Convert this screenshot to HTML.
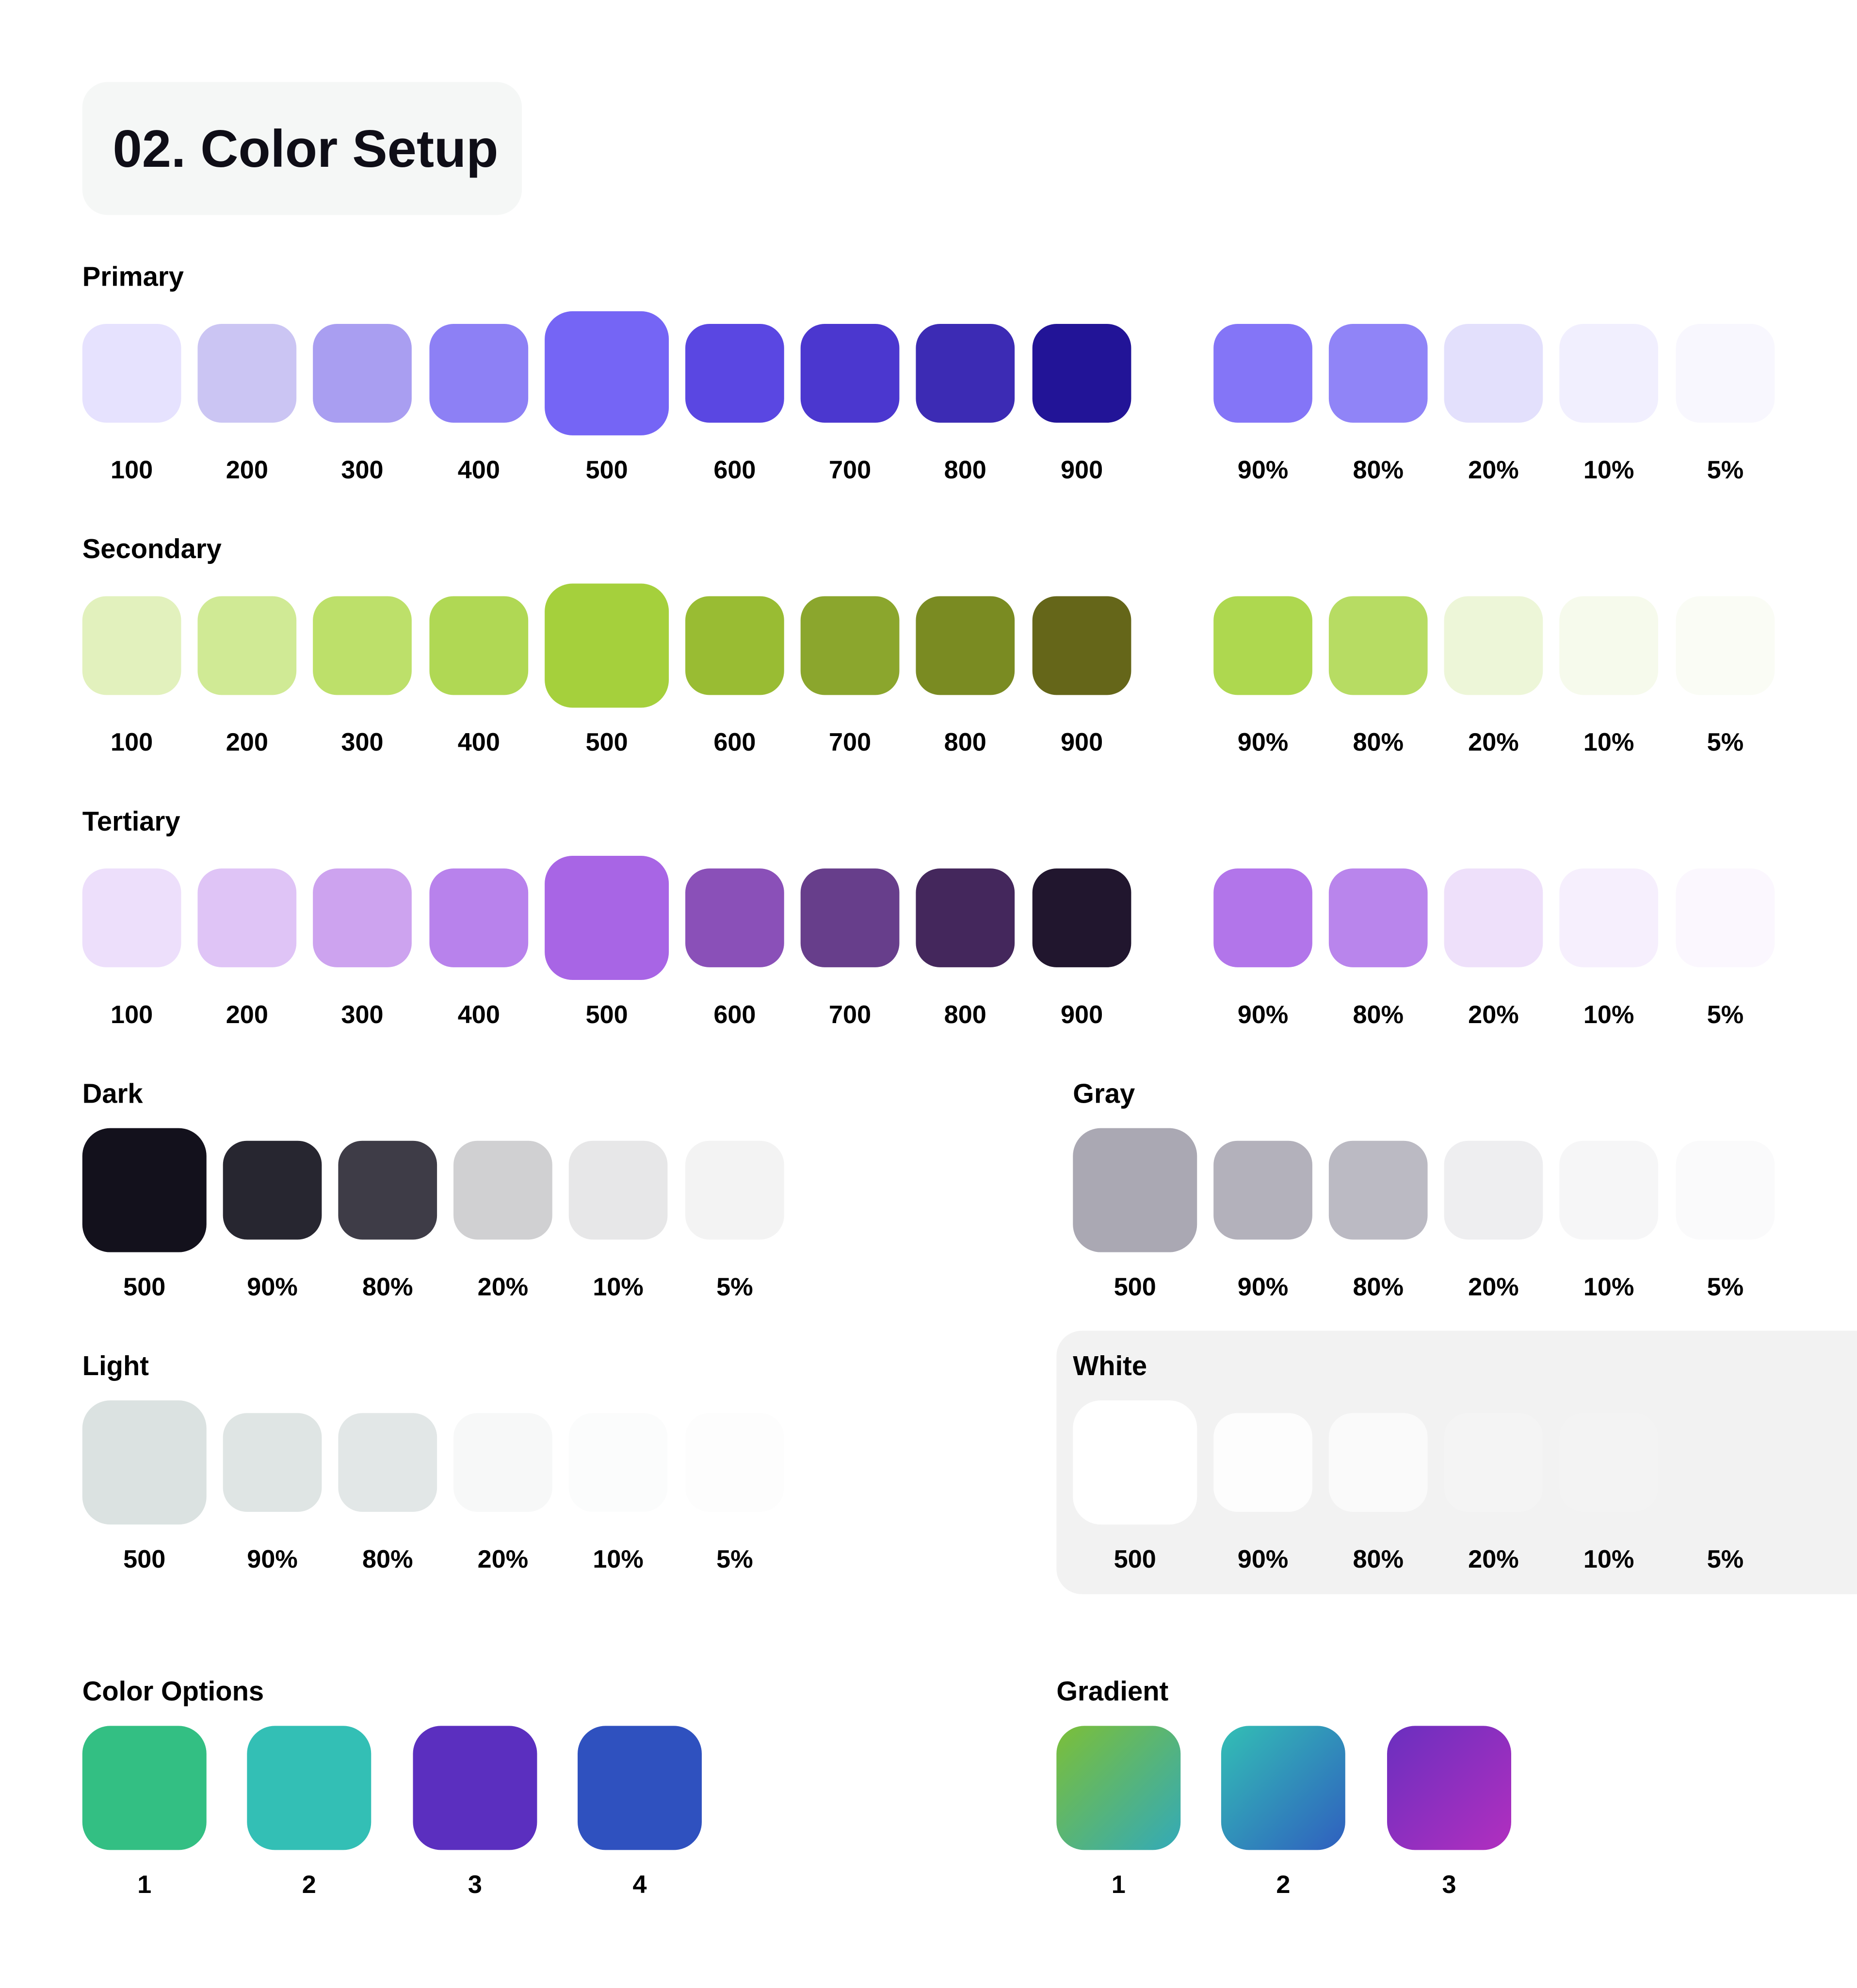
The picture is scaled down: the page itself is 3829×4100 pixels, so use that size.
<!DOCTYPE html>
<html><head><meta charset="utf-8"><style>
html,body{margin:0;padding:0;background:#fff;width:3829px;height:4096px;overflow:hidden}
#w{position:absolute;left:0;top:2px;width:1466px;height:1569px;transform:scale(2.6119);transform-origin:0 0;font-family:"Liberation Sans",sans-serif;font-weight:bold;color:#0f0e17}
.s{position:absolute;width:78px;height:78px;border-radius:19px}
.b{position:absolute;width:98px;height:98px;border-radius:22px}
.l{position:absolute;height:24px;line-height:24px;text-align:center;font-size:20px;color:#000}
.h{position:absolute;font-size:21.5px;height:24px;line-height:24px;color:#000}
</style></head><body><div id="w">
<div style="position:absolute;left:65px;top:64px;width:347px;height:105px;background:#f5f7f6;border-radius:20px"></div>
<div style="position:absolute;left:89px;top:93px;font-size:41.5px;line-height:48px;color:#0f0e17">02. Color Setup</div>

<!-- Primary -->
<div class="h" style="left:65px;top:206px">Primary</div>
<div class="s" style="left:65px;top:255px;background:#e6e2fe"></div>
<div class="s" style="left:156px;top:255px;background:#cbc5f3"></div>
<div class="s" style="left:247px;top:255px;background:#a99ef1"></div>
<div class="s" style="left:339px;top:255px;background:#8d80f5"></div>
<div class="b" style="left:430px;top:245px;background:#7565f5"></div>
<div class="s" style="left:541px;top:255px;background:#5a47e2"></div>
<div class="s" style="left:632px;top:255px;background:#4b37cf"></div>
<div class="s" style="left:723px;top:255px;background:#3c2bb4"></div>
<div class="s" style="left:815px;top:255px;background:#221497"></div>
<div class="s" style="left:958px;top:255px;background:#8475f7"></div>
<div class="s" style="left:1049px;top:255px;background:#9084f7"></div>
<div class="s" style="left:1140px;top:255px;background:#e3e0fc"></div>
<div class="s" style="left:1231px;top:255px;background:#f1effe"></div>
<div class="s" style="left:1323px;top:255px;background:#f8f7fe"></div>
<div class="l" style="left:65px;width:78px;top:359px">100</div>
<div class="l" style="left:156px;width:78px;top:359px">200</div>
<div class="l" style="left:247px;width:78px;top:359px">300</div>
<div class="l" style="left:339px;width:78px;top:359px">400</div>
<div class="l" style="left:430px;width:98px;top:359px">500</div>
<div class="l" style="left:541px;width:78px;top:359px">600</div>
<div class="l" style="left:632px;width:78px;top:359px">700</div>
<div class="l" style="left:723px;width:78px;top:359px">800</div>
<div class="l" style="left:815px;width:78px;top:359px">900</div>
<div class="l" style="left:958px;width:78px;top:359px">90%</div>
<div class="l" style="left:1049px;width:78px;top:359px">80%</div>
<div class="l" style="left:1140px;width:78px;top:359px">20%</div>
<div class="l" style="left:1231px;width:78px;top:359px">10%</div>
<div class="l" style="left:1323px;width:78px;top:359px">5%</div>

<!-- Secondary -->
<div class="h" style="left:65px;top:421px">Secondary</div>
<div class="s" style="left:65px;top:470px;background:#e2f1bd"></div>
<div class="s" style="left:156px;top:470px;background:#d0ea95"></div>
<div class="s" style="left:247px;top:470px;background:#bde06a"></div>
<div class="s" style="left:339px;top:470px;background:#b0d854"></div>
<div class="b" style="left:430px;top:460px;background:#a5d03c"></div>
<div class="s" style="left:541px;top:470px;background:#99bc33"></div>
<div class="s" style="left:632px;top:470px;background:#8ba62d"></div>
<div class="s" style="left:723px;top:470px;background:#7a8b22"></div>
<div class="s" style="left:815px;top:470px;background:#656619"></div>
<div class="s" style="left:958px;top:470px;background:#aed84f"></div>
<div class="s" style="left:1049px;top:470px;background:#b7dc63"></div>
<div class="s" style="left:1140px;top:470px;background:#edf6d8"></div>
<div class="s" style="left:1231px;top:470px;background:#f6faec"></div>
<div class="s" style="left:1323px;top:470px;background:#fafcf5"></div>
<div class="l" style="left:65px;width:78px;top:574px">100</div>
<div class="l" style="left:156px;width:78px;top:574px">200</div>
<div class="l" style="left:247px;width:78px;top:574px">300</div>
<div class="l" style="left:339px;width:78px;top:574px">400</div>
<div class="l" style="left:430px;width:98px;top:574px">500</div>
<div class="l" style="left:541px;width:78px;top:574px">600</div>
<div class="l" style="left:632px;width:78px;top:574px">700</div>
<div class="l" style="left:723px;width:78px;top:574px">800</div>
<div class="l" style="left:815px;width:78px;top:574px">900</div>
<div class="l" style="left:958px;width:78px;top:574px">90%</div>
<div class="l" style="left:1049px;width:78px;top:574px">80%</div>
<div class="l" style="left:1140px;width:78px;top:574px">20%</div>
<div class="l" style="left:1231px;width:78px;top:574px">10%</div>
<div class="l" style="left:1323px;width:78px;top:574px">5%</div>

<!-- Tertiary -->
<div class="h" style="left:65px;top:636px">Tertiary</div>
<div class="s" style="left:65px;top:685px;background:#eddffb"></div>
<div class="s" style="left:156px;top:685px;background:#dfc4f6"></div>
<div class="s" style="left:247px;top:685px;background:#cda3ef"></div>
<div class="s" style="left:339px;top:685px;background:#b882ec"></div>
<div class="b" style="left:430px;top:675px;background:#a865e5"></div>
<div class="s" style="left:541px;top:685px;background:#8a50b8"></div>
<div class="s" style="left:632px;top:685px;background:#673e8b"></div>
<div class="s" style="left:723px;top:685px;background:#44275c"></div>
<div class="s" style="left:815px;top:685px;background:#21162e"></div>
<div class="s" style="left:958px;top:685px;background:#b275ea"></div>
<div class="s" style="left:1049px;top:685px;background:#b985ec"></div>
<div class="s" style="left:1140px;top:685px;background:#eee0fa"></div>
<div class="s" style="left:1231px;top:685px;background:#f6effd"></div>
<div class="s" style="left:1323px;top:685px;background:#fbf7fe"></div>
<div class="l" style="left:65px;width:78px;top:789px">100</div>
<div class="l" style="left:156px;width:78px;top:789px">200</div>
<div class="l" style="left:247px;width:78px;top:789px">300</div>
<div class="l" style="left:339px;width:78px;top:789px">400</div>
<div class="l" style="left:430px;width:98px;top:789px">500</div>
<div class="l" style="left:541px;width:78px;top:789px">600</div>
<div class="l" style="left:632px;width:78px;top:789px">700</div>
<div class="l" style="left:723px;width:78px;top:789px">800</div>
<div class="l" style="left:815px;width:78px;top:789px">900</div>
<div class="l" style="left:958px;width:78px;top:789px">90%</div>
<div class="l" style="left:1049px;width:78px;top:789px">80%</div>
<div class="l" style="left:1140px;width:78px;top:789px">20%</div>
<div class="l" style="left:1231px;width:78px;top:789px">10%</div>
<div class="l" style="left:1323px;width:78px;top:789px">5%</div>

<!-- Dark -->
<div class="h" style="left:65px;top:851px">Dark</div>
<div class="b" style="left:65px;top:890px;background:#13111c"></div>
<div class="s" style="left:176px;top:900px;background:#272630"></div>
<div class="s" style="left:267px;top:900px;background:#3e3c47"></div>
<div class="s" style="left:358px;top:900px;background:#d0d0d2"></div>
<div class="s" style="left:449px;top:900px;background:#e7e7e8"></div>
<div class="s" style="left:541px;top:900px;background:#f3f3f3"></div>
<div class="l" style="left:65px;width:98px;top:1004px">500</div>
<div class="l" style="left:176px;width:78px;top:1004px">90%</div>
<div class="l" style="left:267px;width:78px;top:1004px">80%</div>
<div class="l" style="left:358px;width:78px;top:1004px">20%</div>
<div class="l" style="left:449px;width:78px;top:1004px">10%</div>
<div class="l" style="left:541px;width:78px;top:1004px">5%</div>

<!-- Gray -->
<div class="h" style="left:847px;top:851px">Gray</div>
<div class="b" style="left:847px;top:890px;background:#aaa8b3"></div>
<div class="s" style="left:958px;top:900px;background:#b3b1bb"></div>
<div class="s" style="left:1049px;top:900px;background:#bbbac3"></div>
<div class="s" style="left:1140px;top:900px;background:#eeeef0"></div>
<div class="s" style="left:1231px;top:900px;background:#f6f6f7"></div>
<div class="s" style="left:1323px;top:900px;background:#fafafb"></div>
<div class="l" style="left:847px;width:98px;top:1004px">500</div>
<div class="l" style="left:958px;width:78px;top:1004px">90%</div>
<div class="l" style="left:1049px;width:78px;top:1004px">80%</div>
<div class="l" style="left:1140px;width:78px;top:1004px">20%</div>
<div class="l" style="left:1231px;width:78px;top:1004px">10%</div>
<div class="l" style="left:1323px;width:78px;top:1004px">5%</div>

<!-- Light -->
<div class="h" style="left:65px;top:1066px">Light</div>
<div class="b" style="left:65px;top:1105px;background:#dbe2e1"></div>
<div class="s" style="left:176px;top:1115px;background:#dfe5e4"></div>
<div class="s" style="left:267px;top:1115px;background:#e2e7e7"></div>
<div class="s" style="left:358px;top:1115px;background:#f7f8f8"></div>
<div class="s" style="left:449px;top:1115px;background:#fbfcfc"></div>
<div class="s" style="left:541px;top:1115px;background:#fdfdfd"></div>
<div class="l" style="left:65px;width:98px;top:1219px">500</div>
<div class="l" style="left:176px;width:78px;top:1219px">90%</div>
<div class="l" style="left:267px;width:78px;top:1219px">80%</div>
<div class="l" style="left:358px;width:78px;top:1219px">20%</div>
<div class="l" style="left:449px;width:78px;top:1219px">10%</div>
<div class="l" style="left:541px;width:78px;top:1219px">5%</div>

<!-- White -->
<div style="position:absolute;left:834px;top:1050px;width:640px;height:208px;background:#f2f2f2;border-radius:20px 0 0 20px"></div>
<div class="h" style="left:847px;top:1066px">White</div>
<div class="b" style="left:847px;top:1105px;background:#ffffff"></div>
<div class="s" style="left:958px;top:1115px;background:#fdfdfd"></div>
<div class="s" style="left:1049px;top:1115px;background:#fafafa"></div>
<div class="s" style="left:1140px;top:1115px;background:#f4f4f4"></div>
<div class="s" style="left:1231px;top:1115px;background:#f3f3f3"></div>
<div class="s" style="left:1323px;top:1115px;background:#f2f2f2"></div>
<div class="l" style="left:847px;width:98px;top:1219px">500</div>
<div class="l" style="left:958px;width:78px;top:1219px">90%</div>
<div class="l" style="left:1049px;width:78px;top:1219px">80%</div>
<div class="l" style="left:1140px;width:78px;top:1219px">20%</div>
<div class="l" style="left:1231px;width:78px;top:1219px">10%</div>
<div class="l" style="left:1323px;width:78px;top:1219px">5%</div>

<!-- Color Options -->
<div class="h" style="left:65px;top:1323px">Color Options</div>
<div class="b" style="left:65px;top:1362px;background:#33bf83"></div>
<div class="b" style="left:195px;top:1362px;background:#33bfb5"></div>
<div class="b" style="left:326px;top:1362px;background:#5b2fbf"></div>
<div class="b" style="left:456px;top:1362px;background:#2f51bf"></div>
<div class="l" style="left:65px;width:98px;top:1476px">1</div>
<div class="l" style="left:195px;width:98px;top:1476px">2</div>
<div class="l" style="left:326px;width:98px;top:1476px">3</div>
<div class="l" style="left:456px;width:98px;top:1476px">4</div>

<!-- Gradient -->
<div class="h" style="left:834px;top:1323px">Gradient</div>
<div class="b" style="left:834px;top:1362px;background:linear-gradient(135deg,#7cbf38,#33aab8)"></div>
<div class="b" style="left:964px;top:1362px;background:linear-gradient(135deg,#33bfb5,#2f5fbf)"></div>
<div class="b" style="left:1095px;top:1362px;background:linear-gradient(135deg,#6a2fbf,#b22fbf)"></div>
<div class="l" style="left:834px;width:98px;top:1476px">1</div>
<div class="l" style="left:964px;width:98px;top:1476px">2</div>
<div class="l" style="left:1095px;width:98px;top:1476px">3</div>
</div></body></html>
